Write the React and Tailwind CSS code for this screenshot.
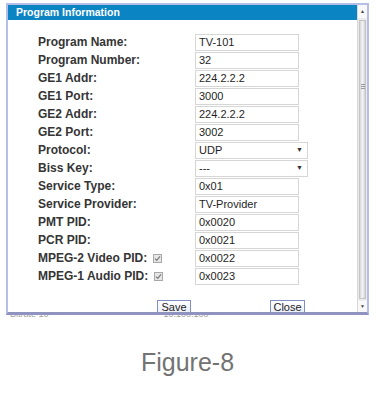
import React from "react";

const rows = [
  { label: "Program Name:", value: "TV-101" },
  { label: "Program Number:", value: "32" },
  { label: "GE1 Addr:", value: "224.2.2.2" },
  { label: "GE1 Port:", value: "3000" },
  { label: "GE2 Addr:", value: "224.2.2.2" },
  { label: "GE2 Port:", value: "3002" },
  { label: "Protocol:", value: "UDP", select: true },
  { label: "Biss Key:", value: "---", select: true },
  { label: "Service Type:", value: "0x01" },
  { label: "Service Provider:", value: "TV-Provider" },
  { label: "PMT PID:", value: "0x0020" },
  { label: "PCR PID:", value: "0x0021" },
  { label: "MPEG-2 Video PID:", value: "0x0022", check: true },
  { label: "MPEG-1 Audio PID:", value: "0x0023", check: true },
];

const Check = () => (
  <svg width="9" height="9" viewBox="0 0 9 9" className="ml-[6px] shrink-0">
    <rect x="0.5" y="0.5" width="8" height="8" fill="#e6e6e6" stroke="#a8a8a8" />
    <path d="M2 4.6 L3.8 6.4 L7 2.4" fill="none" stroke="#7a7a7a" strokeWidth="1.2" />
  </svg>
);

const Row = ({ label, value, select, check }) => (
  <div className="h-[18px] flex items-center">
    <div className="w-[157px] flex items-center text-[12px] font-bold text-[#353535]">
      <span>{label}</span>
      {check && <Check />}
    </div>
    <div
      className={`h-[17px] border border-[#d6d6d6] bg-white flex items-center justify-between pl-[3px] pr-[4px] text-[11px] text-[#1e1e1e] ${
        select ? "w-[113px]" : "w-[104px]"
      }`}
    >
      <span>{value}</span>
      {select && <span className="text-[7px] text-[#333]">▼</span>}
    </div>
  </div>
);

export default function App() {
  return (
    <div className="w-[380px] h-[397px] bg-white overflow-hidden font-['Liberation_Sans',Arial,sans-serif]">
      {/* dialog */}
      <div className="ml-[6px] mt-[3px] w-[363px] h-[312px] border-2 border-b-[3px] border-[#b6bde6] border-b-[#8e94bf] flex overflow-hidden">
        <div className="flex-1 flex flex-col overflow-hidden">
          <div className="h-[15px] bg-[#0b84c4] text-white text-[10.5px] font-bold leading-[15px] pl-[8px]">
            Program Information
          </div>
          <div className="pl-[30px] pt-[13px] flex flex-col">
            {rows.map((r) => (
              <Row key={r.label} {...r} />
            ))}
          </div>
          <div className="mt-[15px] flex pl-[149px]">
            <button className="w-[34px] h-[14px] border border-b-0 border-[#7f8ec8] bg-gradient-to-b from-white to-[#e9edf8] text-[11px] text-[#222] leading-[13px]">
              Save
            </button>
            <button className="ml-[79px] w-[35px] h-[14px] border border-b-0 border-[#7f8ec8] bg-gradient-to-b from-white to-[#e9edf8] text-[11px] text-[#222] leading-[13px]">
              Close
            </button>
          </div>
        </div>
        {/* scrollbar */}
        <div className="w-[10px] flex flex-col bg-[#ececec] border-l border-[#d8d8d8]">
          <div className="h-[13px] bg-[#f8f8f8] flex items-center justify-center text-[5px] text-[#444]">▲</div>
          <div className="flex-1 mx-[1px] my-[2px] border border-[#c4c4c4] bg-gradient-to-r from-[#d6d6d6] via-[#f4f4f4] to-[#d2d2d2] flex items-center justify-center">
            <div className="flex flex-col gap-[1px] mb-[146px]">
              <div className="w-[4px] h-px bg-[#9a9a9a]" />
              <div className="w-[4px] h-px bg-[#9a9a9a]" />
              <div className="w-[4px] h-px bg-[#9a9a9a]" />
            </div>
          </div>
          <div className="h-[11px] bg-[#f8f8f8] flex items-center justify-center text-[5px] text-[#444]">▼</div>
        </div>
      </div>
      {/* clipped text of the page underneath */}
      <div className="h-[4px] overflow-hidden flex text-[9px] text-[#a0a0a0] leading-[9px]">
        <span className="ml-[10px] -mt-[5px]">Bitrate 10</span>
        <span className="ml-[115px] -mt-[5px]">10.100.100</span>
      </div>
      <div className="mt-[31px] pr-[5px] text-center text-[25px] leading-[25px] text-[#737373]">Figure-8</div>
    </div>
  );
}
